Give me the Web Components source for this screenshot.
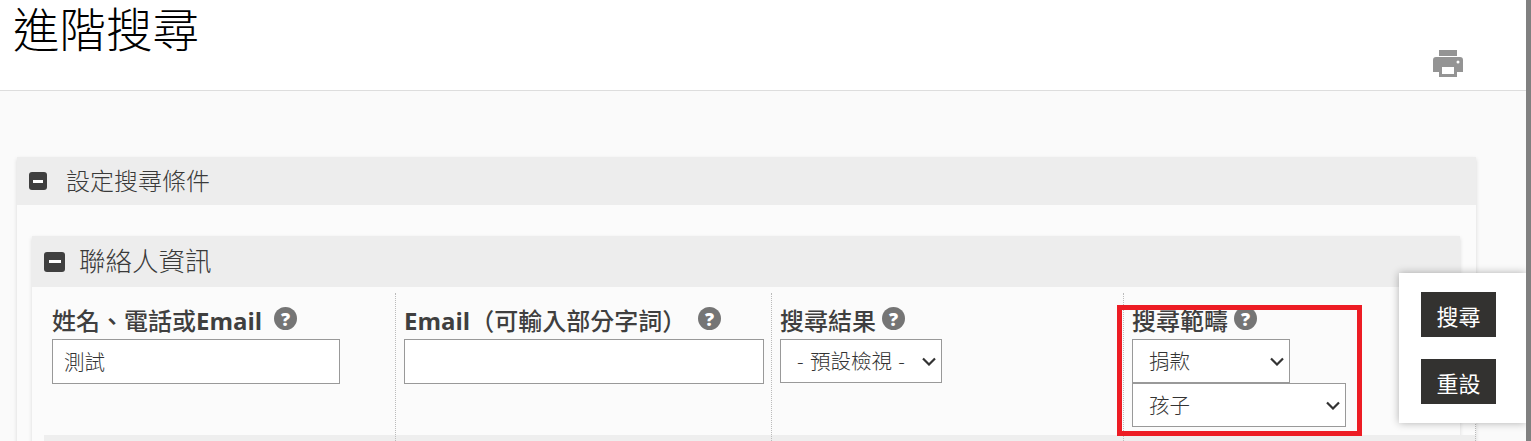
<!DOCTYPE html>
<html lang="zh-Hant">
<head>
<meta charset="utf-8">
<title>進階搜尋</title>
<style>
    html, body { height: 100%; }
    body {
        margin: 0;
        overflow: hidden;
        background: #fafafa;
        color: #3f3f3f;
        font-family: "Open Sans", "Noto Sans CJK TC", sans-serif;
    }
</style>
</head>
<body>
<search-page>
    <page-header title-text="進階搜尋"></page-header>
    <toggle-panel heading="設定搜尋條件" level="1">
        <toggle-panel heading="聯絡人資訊" level="2">
            <field-row>
                <search-field help-gap="12">
                    <span slot="label">姓名、電話或<b>Email</b></span>
                    <text-box value="測試" width="288"></text-box>
                </search-field>
                <search-field help-gap="12">
                    <span slot="label"><b>Email</b>（可輸入部分字詞）</span>
                    <text-box width="360"></text-box>
                </search-field>
                <search-field help-gap="6">
                    <span slot="label">搜尋結果</span>
                    <pick-box width="162" options="- 預設檢視 -"></pick-box>
                </search-field>
                <search-field help-gap="6">
                    <span slot="label">搜尋範疇</span>
                    <pick-box width="158" options="捐款"></pick-box>
                    <pick-box width="214" options="孩子"></pick-box>
                </search-field>
            </field-row>
        </toggle-panel>
    </toggle-panel>
    <action-bar></action-bar>
    <red-mark></red-mark>
</search-page>

<script>
const FONT = '"Open Sans", "Noto Sans CJK TC", sans-serif';

class SearchPage extends HTMLElement {
    constructor() {
        super();
        this.attachShadow({ mode: 'open' });
        this.shadowRoot.innerHTML = `
            <style>
                :host { display: block; position: relative; height: 441px; overflow: hidden; padding-right: 5px; box-sizing: border-box; }
                .bar { position: absolute; top: 0; right: 0; bottom: 0; width: 5px; background: #808080; }
            </style>
            <slot></slot>
            <div class="bar"></div>
        `;
    }
}

class PageHeader extends HTMLElement {
    constructor() {
        super();
        this.attachShadow({ mode: 'open' });
    }

    connectedCallback() {
        this.shadowRoot.innerHTML = `
            <style>
                :host { display: flex; justify-content: space-between; height: 90px; background: #fff; border-bottom: 1px solid #ddd; margin-right: -5px; padding: 0 68px 0 13px; }
                h1 { margin: 5px 0 0; font: 300 46.5px/52px "Liberation Sans", "Noto Sans CJK TC", sans-serif; color: #000; }
                svg { width: 30px; height: 27px; margin-top: 50px; fill: #949494; }
            </style>
            <h1>${this.getAttribute('title-text')}</h1>
            <svg viewBox="0 0 30 27"><path d="M6 0h18v6H6zM3 7h24a3 3 0 0 1 3 3v12h-6v5H6v-5H0V10a3 3 0 0 1 3-3zm6 10v7h12v-7zm16-6.500a1.500 1.500 0 1 0 0 3 1.500 1.500 0 0 0 0-3z" fill-rule="evenodd"/></svg>
        `;
    }
}

class TogglePanel extends HTMLElement {
    constructor() {
        super();
        this.attachShadow({ mode: 'open' });
    }

    connectedCallback() {
        const top = this.getAttribute('level') === '1';
        this.shadowRoot.innerHTML = `
            <style>
                :host { display: block; box-shadow: 0 2px 4px rgba(0,0,0,.14); background: #fbfbfb;
                    margin: ${top ? '66px 50px 0 17px' : '31px 16px 0 15px'}; }
                .head { display: flex; align-items: center; background: #ededed; color: #3a3a3a;
                    height: ${top ? 48 : 51}px; padding-left: 12px; gap: ${top ? 19 : 14}px;
                    font: 300 ${top ? 24 : 26.5}px/1 ${FONT}; }
                .icon { display: flex; align-items: center; justify-content: center; border-radius: 3px;
                    background: #3f3f3f; width: ${top ? 18 : 21}px; height: ${top ? 18 : 20}px; }
                .icon::before { content: ""; width: ${top ? 10 : 12}px; height: 3px; background: #fff; }
                .body { padding: ${top ? 0 : '6px 0 0 12px'}; }
            </style>
            <div class="head"><span class="icon"></span><span>${this.getAttribute('heading')}</span></div>
            <div class="body"><slot></slot></div>
        `;
    }
}

class FieldRow extends HTMLElement {
    constructor() {
        super();
        this.attachShadow({ mode: 'open' });
        this.shadowRoot.innerHTML = `
            <style>
                :host { display: grid; grid-template-columns: 352px 376px 352px 352px; width: 1432px; height: 200px;
                    background: linear-gradient(transparent 142px, #eee 142px); }
            </style>
            <slot></slot>
        `;
    }
}

class SearchField extends HTMLElement {
    constructor() {
        super();
        this.attachShadow({ mode: 'open' });
    }

    connectedCallback() {
        this.shadowRoot.innerHTML = `
            <style>
                :host { display: block; padding: 12px 8px 0; border-right: 1px dotted #bbb; }
                .label { display: flex; align-items: center; height: 34px; font: 500 24px/32px ${FONT}; color: #3f3f3f; white-space: nowrap; }
                ::slotted(span) { padding-bottom: 2px; }
                .help { display: flex; align-items: center; justify-content: center; flex: none; width: 23px; height: 23px;
                    margin: -7px 0 0 ${this.getAttribute('help-gap')}px; border-radius: 50%; background: #757575; color: #fff; font: 800 18px/1 ${FONT}; }
                .fields { display: flex; flex-direction: column; align-items: flex-start; }
            </style>
            <div class="label"><slot name="label"></slot><span class="help">?</span></div>
            <div class="fields"><slot></slot></div>
        `;
    }
}

class TextBox extends HTMLElement {
    constructor() {
        super();
        this.attachShadow({ mode: 'open' });
    }

    connectedCallback() {
        this.shadowRoot.innerHTML = `
            <style>
                :host { display: block; }
                input { display: block; box-sizing: border-box; width: ${this.getAttribute('width')}px; height: 45px;
                    border: 1px solid #999; border-radius: 0; background: #fff; padding: 0 11px 2px; color: #333; font: 300 20.5px ${FONT}; }
            </style>
            <input type="text" value="${this.getAttribute('value') || ''}">
        `;
    }
}

class PickBox extends HTMLElement {
    constructor() {
        super();
        this.attachShadow({ mode: 'open' });
    }

    connectedCallback() {
        const options = this.getAttribute('options').split(',').map(o => `<option>${o}</option>`).join('');
        this.shadowRoot.innerHTML = `
            <style>
                :host { display: block; position: relative; }
                select { display: block; box-sizing: border-box; width: ${this.getAttribute('width')}px; height: 44px; appearance: none;
                    border: 1px solid #999; border-radius: 0; background: #fff; padding: 0 24px 0 16px; color: #333; font: 300 20.5px ${FONT}; word-spacing: 1px; }
                svg { position: absolute; right: 6px; top: 18px; width: 14px; height: 9px; fill: none; stroke: #333; stroke-width: 2.2; pointer-events: none; }
            </style>
            <select>${options}</select>
            <svg viewBox="0 0 14 9"><path d="M1 1.500l6 6 6-6"/></svg>
        `;
    }
}

class ActionBar extends HTMLElement {
    constructor() {
        super();
        this.attachShadow({ mode: 'open' });
        this.shadowRoot.innerHTML = `
            <style>
                :host { position: absolute; top: 273px; left: 1399px; width: 127px; height: 150px; box-sizing: border-box;
                    display: flex; flex-direction: column; gap: 22px; padding: 19px 0 0 22px; background: #fff; box-shadow: 0 0 8px rgba(0,0,0,.3); }
                button { width: 75px; height: 45px; padding: 0; border: 0; border-radius: 0; background: #333230; color: #fff; font: 400 22px ${FONT}; }
            </style>
            <button>搜尋</button>
            <button>重設</button>
        `;
    }
}

class RedMark extends HTMLElement {
    constructor() {
        super();
        this.attachShadow({ mode: 'open' });
        this.shadowRoot.innerHTML = `
            <style>
                :host { position: absolute; top: 305px; left: 1117px; width: 245px; height: 131px; box-sizing: border-box; border: 5px solid #ed1c24; pointer-events: none; }
            </style>
        `;
    }
}

customElements.define('search-page', SearchPage);
customElements.define('page-header', PageHeader);
customElements.define('toggle-panel', TogglePanel);
customElements.define('field-row', FieldRow);
customElements.define('search-field', SearchField);
customElements.define('text-box', TextBox);
customElements.define('pick-box', PickBox);
customElements.define('action-bar', ActionBar);
customElements.define('red-mark', RedMark);
</script>
</body>
</html>
